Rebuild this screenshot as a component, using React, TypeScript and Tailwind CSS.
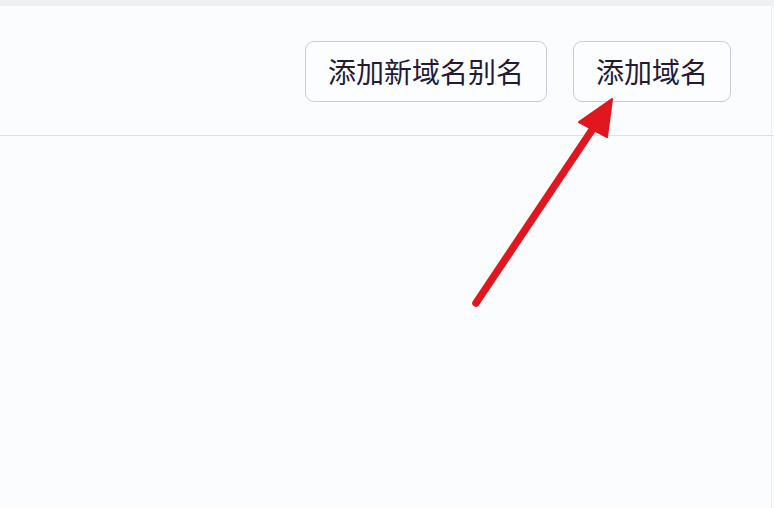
export default function App() {
  return (
    <div
      className="relative h-[508px] w-[774px] overflow-hidden bg-[#fbfcfe]"
      style={{ fontFamily: '"Noto Sans CJK SC", "Noto Sans", sans-serif' }}
    >
      <div className="h-[6px] bg-[#eef0f4]" />
      <div className="flex h-[130px] items-start justify-end gap-[26px] border-b border-[#dde0e7] pr-[43px] pt-[35px]">
        <button className="flex h-[61px] w-[242px] items-center justify-center rounded-[9px] border border-[#c8ccd8] bg-[#fcfdfe] pb-[2px] text-[28px] font-normal text-[#241b35]">
          添加新域名别名
        </button>
        <button className="flex h-[61px] w-[158px] items-center justify-center rounded-[9px] border border-[#c8ccd8] bg-[#fcfdfe] pb-[2px] text-[28px] font-normal text-[#241b35]">
          添加域名
        </button>
      </div>
      <div className="absolute right-[2px] top-[6px] h-full w-px bg-[#eceef2]" />

      <svg
        className="pointer-events-none absolute left-0 top-0"
        width="774"
        height="508"
        viewBox="0 0 774 508"
      >
        <line
          x1="476"
          y1="303"
          x2="596"
          y2="124"
          stroke="#e1161e"
          strokeWidth="7.5"
          strokeLinecap="round"
        />
        <polygon
          points="612,99 579,122 607,137"
          fill="#e1161e"
          stroke="#e1161e"
          strokeWidth="2"
          strokeLinejoin="round"
        />
      </svg>
    </div>
  );
}
